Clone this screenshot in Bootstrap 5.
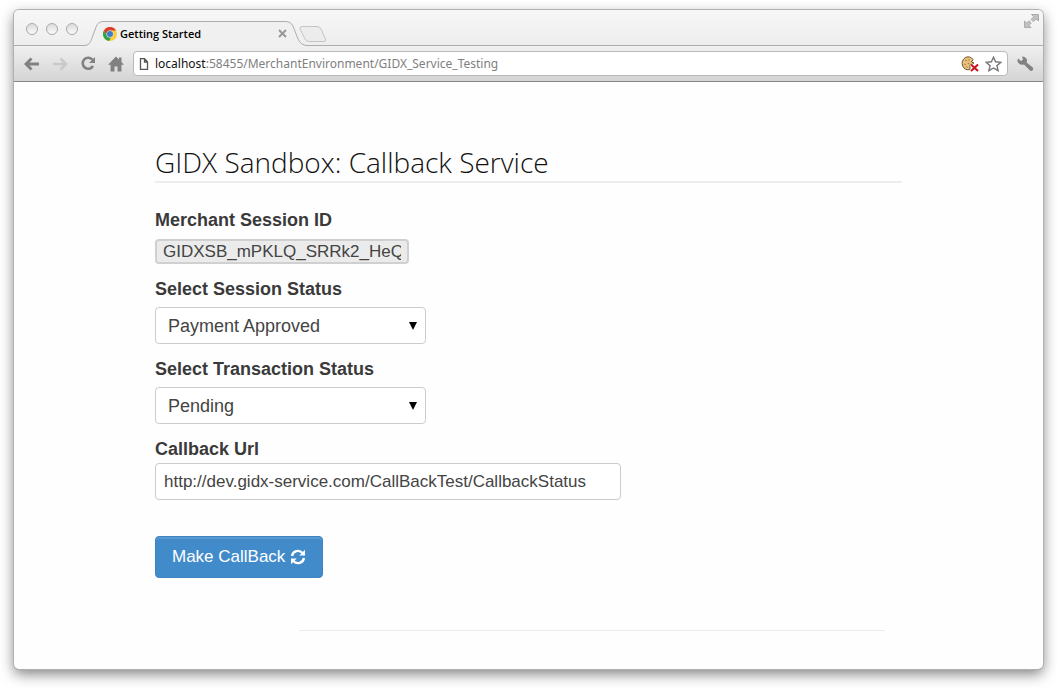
<!DOCTYPE html>
<html lang="en">
<head>
<meta charset="utf-8">
<meta name="viewport" content="width=device-width, initial-scale=1">
<title>Getting Started</title>
<link href="https://cdn.jsdelivr.net/npm/bootstrap@5.3.0/dist/css/bootstrap.min.css" rel="stylesheet">
<style>
  body { background: #fff; font-family: "Liberation Sans", Arial, sans-serif; padding: 10px 14px 20px; }
  .browser { min-height: calc(100vh - 30px); border-radius: 5px; background: #fefefe; box-shadow: 0 0 0 1px #b0b0b0, 0 5px 14px rgba(0,0,0,.5); }
  .chrome-head { background: linear-gradient(#f7f7f7, #e4e4e4); border-radius: 5px 5px 0 0; }
  .tab-strip { height: 36px; border-bottom: 1px solid #adadad; }
  .lights { gap: 8px; padding: 13px 0 0 12px; }
  .light { width: 12px; height: 12px; padding: 0; border: 1px solid #a9a9a9; border-radius: 50%; background: linear-gradient(#dcdcdc, #fafafa); }
  .browser-tab { width: 225px; height: 26px; margin: 10px 0 0 6px; padding: 1px 22px 0 19px; }
  .tab-shape { inset: 0; }
  .tab-title { font: 600 11px/16px "Open Sans", sans-serif; color: #000; margin-left: 3px; }
  .bare { border: 0; background: none; padding: 0; line-height: 0; }
  .new-tab { margin: 16px 0 0 -10px; }
  .full-screen { margin: 4px 4px 0 auto; }
  .tool-bar { height: 36px; padding: 0 9px 0 10px; gap: 12px; background: linear-gradient(#f0f0f0, #d4d4d4); border-bottom: 1px solid #858585; }
  .address { height: 25px; border: 1px solid #b9b9b9; border-radius: 4px; background: #fff; padding: 0 5px; gap: 6px; margin: 0 -3px; }
  .address-text { font: 12px/20px "Noto Sans", sans-serif; color: #808080; text-decoration: none; padding-top: 1px; }
  .address-text span { color: #111; }
  .page { max-width: 747px; padding-top: 62px; color: #333; }
  .page h1 { font: 300 28px/36px "Open Sans", sans-serif; color: #111; border-bottom: 2px solid #ededed; padding-bottom: 1px; margin: 0 0 27px; }
  .page label { font-size: 18px; line-height: 20px; font-weight: 700; color: #3a3a3a; display: block; margin-bottom: 8px; }
  .field { margin-bottom: 15px; }
  .field .form-control, .field .form-select { line-height: 24px; height: 37px; color: #444; border: 1px solid #ccc; border-radius: 4px; }
  .field .form-control { font-size: 17px; padding: 0 8px; }
  .field .form-select { font-size: 18px; width: 271px; padding: 0 30px 0 12px; background: #fff url("data:image/svg+xml,%3Csvg xmlns='http://www.w3.org/2000/svg' viewBox='0 0 8 8'%3E%3Cpath d='M0 0h8L4 8z' fill='%23000'/%3E%3C/svg%3E") no-repeat right 8px center / 8px 8px; }
  .field .session-id { width: 254px; height: 25px; background: #ebebeb; border: 2px solid #d0d0d0; padding: 0 6px; }
  .page .session-label { margin-bottom: 9px; }
  .page .url-label { margin-bottom: 4px; }
  .field .url-box { width: 466px; }
  .btn-call { height: 42px; margin-top: 36px; padding: 0 16px; font-size: 17px; line-height: 24px; color: #fff; background: #428bca; border: 1px solid #3d84c2; border-radius: 4px; gap: 5px; box-shadow: inset 0 2px 0 rgba(255,255,255,.12); }
  .btn-call:hover { color: #fff; background: #3276b1; }
  .foot-rule { margin: 52px 17px 0 144px; border-top: 1px solid #ebebeb; opacity: 1; }
</style>
</head>
<body>
<div class="browser">
  <header class="chrome-head">
    <div class="tab-strip d-flex align-items-start">
      <div class="lights d-flex">
        <button class="light" aria-label="Close window"></button>
        <button class="light" aria-label="Minimize window"></button>
        <button class="light" aria-label="Zoom window"></button>
      </div>
      <div class="browser-tab position-relative d-flex align-items-center">
        <svg class="tab-shape position-absolute" width="226" height="27" viewBox="0 0 226 27" aria-hidden="true">
          <path d="M0 25.500C5 25.500 6 23 8 18L12 7Q14 1.500 19 1.500H201Q207 1.500 209 6L214 19Q217 25.500 223 25.500H226V27H0Z" fill="#f0f0f0"/>
          <path d="M0 25.500C5 25.500 6 23 8 18L12 7Q14 1.500 19 1.500H201Q207 1.500 209 6L214 19Q217 25.500 223 25.500H226" fill="none" stroke="#adadad"/>
        </svg>
        <svg class="position-relative flex-shrink-0" width="14" height="14" viewBox="0 0 14 14" aria-hidden="true">
          <circle cx="7" cy="7" r="7" fill="#fc3"/>
          <path d="M.9 3.500A7 7 0 0 1 13.100 3.500H7A3.500 3.500 0 0 0 3.900 8.500Z" fill="#dc3a2d"/>
          <path d="M.9 3.500L4 8.700A3.500 3.500 0 0 0 8 10.400L6 14A7 7 0 0 1 .9 3.500Z" fill="#2fa24c"/>
          <circle cx="7" cy="7" r="3.500" fill="#d9e6f5"/><circle cx="7" cy="7" r="3" fill="#3b7ed0"/>
        </svg>
        <span class="tab-title position-relative me-auto">Getting Started</span>
        <button class="bare position-relative" aria-label="Close tab"><svg width="9" height="9" viewBox="0 0 9 9"><path d="M1 1L8 8M8 1L1 8" stroke="#999" stroke-width="2"/></svg></button>
      </div>
      <button class="bare new-tab" aria-label="New tab"><svg width="28" height="17" viewBox="0 0 28 17"><path d="M3 .5H18Q21 .5 22 3L26.500 13Q27 15.500 25 15.500H10Q7 15.500 6 13L1 3Q.5 .5 3 .5Z" fill="#ececec" stroke="#c4c4c4"/></svg></button>
      <button class="bare full-screen" aria-label="Full screen"><svg width="15" height="14" viewBox="0 0 15 14"><path d="M7.500 .5H14.500V7L12 5L9.500 7.500L7 5.500L9.800 2.700ZM7 13.500H.5V7L2.700 9L5 6.800L7.300 9L5 11.300Z" fill="#c2c2c2" stroke="#a0a0a0" stroke-width=".8"/></svg></button>
    </div>
    <nav class="tool-bar d-flex align-items-center" aria-label="Browser">
      <button class="bare" aria-label="Back"><svg width="16" height="14" viewBox="0 0 16 14"><path d="M7.500 1.500L2 7L7.500 12.500M2.500 7H15" fill="none" stroke="#818181" stroke-width="2.800"/></svg></button>
      <button class="bare" aria-label="Forward"><svg width="16" height="14" viewBox="0 0 16 14"><path d="M8.500 1.500L14 7L8.500 12.500M13.500 7H1" fill="none" stroke="#c9c9c9" stroke-width="2.500"/></svg></button>
      <button class="bare" aria-label="Reload"><svg width="16" height="15" viewBox="0 0 16 15"><path d="M12.500 3.800A5.500 5.500 0 1 0 13 10" fill="none" stroke="#818181" stroke-width="2.600"/><path d="M15 1V7H9Z" fill="#818181"/></svg></button>
      <button class="bare" aria-label="Home"><svg width="16" height="16" viewBox="0 0 16 16"><path d="M8 .5L11 3.600V1.500H13.500V6L16 8.800H13.500V15.500H9.500V10.500H6.500V15.500H2.500V8.800H0Z" fill="#818181"/></svg></button>
      <div class="address d-flex align-items-center flex-grow-1">
        <svg width="10" height="12" viewBox="0 0 10 12" aria-hidden="true"><path d="M1.500 .7H5.500L8.500 3.700V11.300H1.500ZM5.500 .7V4H8.500" fill="#fff" stroke="#555" stroke-width="1.300"/></svg>
        <a class="address-text me-auto" href="#"><span>localhost</span>:58455/MerchantEnvironment/GIDX_Service_Testing</a>
        <button class="bare" aria-label="Cookies blocked"><svg width="18" height="16" viewBox="0 0 18 16"><path d="M12 3.500A6 6.500 0 1 0 9 13.500L9 9L13 7L10.500 6Z" fill="#e6c27b" stroke="#77572e"/><g fill="#a97c42"><circle cx="5" cy="4.500" r=".8"/><circle cx="8" cy="4" r=".7"/><circle cx="4" cy="8.500" r=".8"/><circle cx="7.500" cy="7.500" r=".8"/><circle cx="6" cy="11" r=".7"/></g><path d="M10 8.500L17 15M17 8.500L10 15" stroke="#fff" stroke-width="3.500"/><path d="M10 8.500L17 15M17 8.500L10 15" stroke="#c8141e" stroke-width="2"/></svg></button>
        <button class="bare" aria-label="Bookmark"><svg width="17" height="16" viewBox="0 0 17 16"><path d="M8.500 1.200L10.600 5.800L15.800 6.300L11.900 9.700L13.100 14.700L8.500 12L3.900 14.700L5.100 9.700L1.200 6.300L6.400 5.800Z" fill="#fff" stroke="#777" stroke-width="1.400"/></svg></button>
      </div>
      <button class="bare" aria-label="Settings"><svg width="17" height="16" viewBox="0 0 17 16"><path d="M1 2.500L4 5L6 3.500L5 .5Q9 .5 10 4Q10 6 9.500 6.500L15.800 11.500Q17 13 15.500 14.500Q13.800 15.500 12.500 14L7 8.500Q3 9.500 1 6.500Q0 4.500 1 2.500Z" fill="#818181"/></svg></button>
    </nav>
  </header>
  <main class="page mx-auto">
    <h1>GIDX Sandbox: Callback Service</h1>
    <form>
      <div class="field">
        <label class="session-label" for="session">Merchant Session ID</label>
        <input class="form-control session-id" id="session" type="text" readonly value="GIDXSB_mPKLQ_SRRk2_HeQ">
      </div>
      <div class="field">
        <label for="status">Select Session Status</label>
        <select class="form-select" id="status"><option>Payment Approved</option></select>
      </div>
      <div class="field">
        <label for="transaction">Select Transaction Status</label>
        <select class="form-select" id="transaction"><option>Pending</option></select>
      </div>
      <div class="field">
        <label class="url-label" for="url">Callback Url</label>
        <input class="form-control url-box" id="url" type="text" value="http://dev.gidx-service.com/CallBackTest/CallbackStatus">
      </div>
      <button class="btn btn-call d-flex align-items-center" type="button">Make CallBack
        <svg width="16" height="16" viewBox="0 0 16 16" aria-hidden="true"><path d="M2 7A6 6 0 0 1 12.500 4M14 9A6 6 0 0 1 3.500 12" fill="none" stroke="#fff" stroke-width="2.300"/><path d="M15 .8V6.500H9.300ZM1 15.200V9.500H6.700Z" fill="#fff"/></svg>
      </button>
    </form>
    <hr class="foot-rule">
  </main>
</div>
<script src="https://cdn.jsdelivr.net/npm/bootstrap@5.3.0/dist/js/bootstrap.bundle.min.js"></script>
</body>
</html>
